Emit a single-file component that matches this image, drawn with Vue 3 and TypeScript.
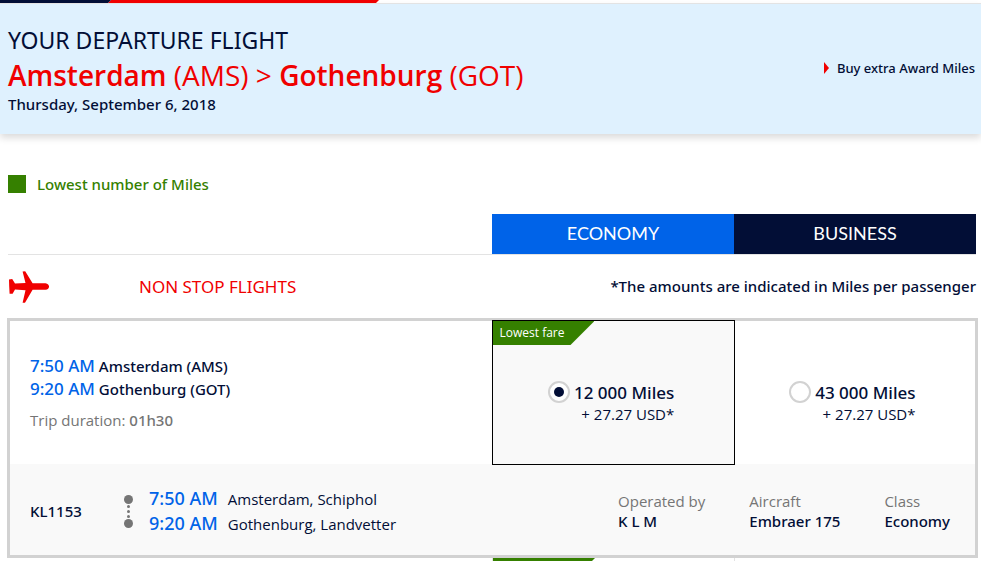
<script setup lang="ts">
import { ref } from 'vue'

interface Fare {
  id: string
  cabin: string
  miles: string
  tax: string
  lowest: boolean
}

interface Stop {
  time: string
  city: string
  airport: string
}

const fares: Fare[] = [
  { id: 'economy', cabin: 'ECONOMY', miles: '12 000 Miles', tax: '+ 27.27 USD*', lowest: true },
  { id: 'business', cabin: 'BUSINESS', miles: '43 000 Miles', tax: '+ 27.27 USD*', lowest: false },
]

const stops: Stop[] = [
  { time: '7:50 AM', city: 'Amsterdam (AMS)', airport: 'Amsterdam, Schiphol' },
  { time: '9:20 AM', city: 'Gothenburg (GOT)', airport: 'Gothenburg, Landvetter' },
]

const facts = [
  { label: 'Operated by', value: 'K L M' },
  { label: 'Aircraft', value: 'Embraer 175' },
  { label: 'Class', value: 'Economy' },
]

const selected = ref('economy')
</script>

<template>
  <div class="page">
    <div class="brand-bar">
      <span class="brand-red"></span>
      <span class="brand-navy"></span>
    </div>

    <header class="banner">
      <div>
        <h1 class="title medium">YOUR DEPARTURE FLIGHT</h1>
        <p class="route"><b>Amsterdam</b> (AMS) &gt; <b>Gothenburg</b> (GOT)</p>
        <p class="date medium">Thursday, September 6, 2018</p>
      </div>
      <a class="buy medium" href="#">Buy extra Award Miles</a>
    </header>

    <main class="content">
      <p class="legend medium"><span class="swatch"></span>Lowest number of Miles</p>

      <div class="cabins">
        <div v-for="fare in fares" :key="fare.id" class="cabin" :class="fare.id">{{ fare.cabin }}</div>
      </div>

      <div class="group-head">
        <svg class="plane" viewBox="0 0 42 34" aria-hidden="true">
          <path
            d="M1 9.5 4.2 9 7 13.6 17.5 13 14.6 1.6 17.2 1.2 24.6 13.2 37.5 13.2C42.2 13.6 42.2 19.4 37.5 19.8L24.6 19.8 17 32.8 14.6 32.8 17.5 20.2 7 19.6 4.6 23.8 1.6 23.8 1.2 16.5Z"
          />
        </svg>
        <h2 class="group-title medium">NON STOP FLIGHTS</h2>
        <p class="note medium">*The amounts are indicated in Miles per passenger</p>
      </div>

      <section class="flight">
        <div class="options">
          <div class="summary">
            <p v-for="stop in stops" :key="stop.time" class="leg medium">
              <span class="leg-time">{{ stop.time }}</span> {{ stop.city }}
            </p>
            <p class="duration">Trip duration: <span class="medium">01h30</span></p>
          </div>
          <label
            v-for="fare in fares"
            :key="fare.id"
            class="fare"
            :class="{ active: selected === fare.id }"
            :for="fare.id"
          >
            <span v-if="fare.lowest" class="tag">Lowest fare</span>
            <input :id="fare.id" v-model="selected" class="radio" type="radio" name="fare" :value="fare.id" />
            <span class="price">
              <span class="miles medium">{{ fare.miles }}</span>
              <span class="tax">{{ fare.tax }}</span>
            </span>
          </label>
        </div>

        <div class="details">
          <span class="number medium">KL1153</span>
          <svg class="track" viewBox="0 0 9 33" aria-hidden="true">
            <circle cx="4.5" cy="4.5" r="4.5" />
            <circle cx="4.5" cy="28.5" r="4.5" />
            <circle cx="4.5" cy="11.5" r="1.5" />
            <circle cx="4.5" cy="16.5" r="1.5" />
            <circle cx="4.5" cy="21.5" r="1.5" />
          </svg>
          <div class="stops">
            <template v-for="stop in stops" :key="stop.time">
              <span class="stop-time medium">{{ stop.time }}</span>
              <span class="stop-place">{{ stop.airport }}</span>
            </template>
          </div>
          <dl class="facts">
            <div v-for="fact in facts" :key="fact.label">
              <dt>{{ fact.label }}</dt>
              <dd class="medium">{{ fact.value }}</dd>
            </div>
          </dl>
        </div>
      </section>

      <div class="next">
        <div class="next-fare"><span class="next-tag"></span></div>
        <div class="next-fare"></div>
      </div>
    </main>
  </div>
</template>

<style>
body {
  margin: 0;
  background: #fff;
}
</style>

<style scoped>
.page {
  font-family: 'Open Sans', 'Noto Sans', sans-serif;
  font-size: 15px;
  color: #020e36;
}

.page * {
  box-sizing: border-box;
}

h1,
h2,
p,
dl,
dd {
  margin: 0;
}

b {
  font-weight: 600;
}

.medium {
  font-family: 'Noto Sans', 'Open Sans', sans-serif;
  font-weight: 500;
}

.brand-bar {
  display: flex;
  flex-direction: row-reverse;
  justify-content: flex-end;
  height: 3px;
}

.brand-navy {
  width: 111px;
  background: #020e36;
  clip-path: polygon(0 0, 100% 0, calc(100% - 3px) 100%, 0 100%);
}

.brand-red {
  width: 271px;
  margin-left: -3px;
  background: #f00000;
  clip-path: polygon(3px 0, 100% 0, calc(100% - 3px) 100%, 0 100%);
}

.banner {
  display: flex;
  justify-content: space-between;
  align-items: center;
  height: 131px;
  padding: 0 6px 0 8px;
  border-top: 1px solid #e3e3e3;
  background: #dff1fe;
  box-shadow: 0 4px 7px rgba(0, 0, 0, 0.14);
}

.title {
  font-size: 23px;
  font-weight: 400;
  line-height: 32px;
}

.route {
  font-size: 28px;
  line-height: 38px;
  color: #f00000;
}

.date {
  line-height: 20px;
}

.buy {
  display: flex;
  align-items: center;
  gap: 8px;
  padding-bottom: 2px;
  font-size: 13px;
  color: inherit;
  text-decoration: none;
}

.buy::before {
  content: '';
  border-left: 5px solid #f00000;
  border-top: 6px solid transparent;
  border-bottom: 6px solid transparent;
}

.content {
  padding: 40px 5px 0 8px;
}

.legend {
  display: flex;
  align-items: center;
  gap: 11px;
  line-height: 20px;
  color: #358000;
}

.swatch {
  width: 18px;
  height: 18px;
  background: #358000;
}

.cabins {
  display: grid;
  grid-template-columns: 1fr 1fr;
  margin-top: 20px;
  padding-left: 50%;
  border-bottom: 1px solid #e3e3e3;
}

.cabin {
  padding-bottom: 2px;
  font-family: Lato, sans-serif;
  font-size: 18px;
  line-height: 38px;
  text-align: center;
  color: #fff;
}

.economy {
  background: #0063e8;
}

.business {
  background: #020e36;
}

.group-head {
  display: flex;
  align-items: center;
  height: 63px;
}

.plane {
  width: 42px;
  height: 34px;
  fill: #f00000;
}

.group-title {
  margin-left: 89px;
  font-size: 17px;
  font-weight: 400;
  color: #f00000;
}

.note {
  margin-left: auto;
  padding-bottom: 2px;
}

.flight {
  margin: 0 -2px 0 -1px;
  border: 3px solid #d2d2d2;
}

.options {
  display: grid;
  grid-template-columns: 2fr 1fr 1fr;
  height: 143px;
}

.summary {
  padding: 33px 20px 0;
}

.leg {
  height: 23px;
  line-height: 23px;
}

.leg-time {
  font-size: 17px;
  color: #0063e8;
}

.duration {
  margin-top: 8px;
  line-height: 24px;
  color: #757575;
}

.fare {
  position: relative;
  display: flex;
  justify-content: center;
  align-items: flex-start;
  gap: 4px;
  margin: -1px -1px -1px -1px;
  padding: 60px 4px 0 0;
  border: 1px solid transparent;
  cursor: pointer;
}

.fare.active {
  border-color: #000;
  background: #f9f9f9;
}

.tag {
  position: absolute;
  top: 0;
  left: 0;
  padding: 0 30px 0 7px;
  font-size: 12px;
  line-height: 24px;
  color: #fff;
  background: #358000;
  clip-path: polygon(0 0, 100% 0, calc(100% - 24px) 100%, 0 100%);
}

.radio {
  display: grid;
  place-items: center;
  width: 22px;
  height: 22px;
  margin: 0;
  appearance: none;
  border: 2px solid #d2d2d2;
  border-radius: 50%;
  background: #fff;
}

.radio:checked::before {
  content: '';
  width: 10px;
  height: 10px;
  border-radius: 50%;
  background: #020e36;
}

.price {
  display: flex;
  flex-direction: column;
  align-items: flex-end;
}

.miles {
  font-size: 17px;
  line-height: 24px;
}

.tax {
  line-height: 18px;
}

.details {
  display: flex;
  align-items: center;
  height: 91px;
  padding: 3px 25px 0 20px;
  background: #f9f9f9;
}

.number {
  width: 94px;
}

.track {
  width: 9px;
  height: 33px;
  margin-right: 16px;
  fill: #757575;
}

.stops {
  display: grid;
  grid-template-columns: auto auto;
  column-gap: 10px;
  align-items: baseline;
  line-height: 24px;
}

.stop-time {
  font-size: 18px;
  color: #0063e8;
}

.facts {
  display: flex;
  gap: 44px;
  margin-left: auto;
  line-height: 20px;
}

.facts dt {
  color: #757575;
}

.next {
  display: grid;
  grid-template-columns: 1fr 1fr;
  height: 3px;
  padding-left: 50%;
  overflow: hidden;
}

.next-fare {
  border-left: 1px solid #e3e3e3;
}

.next-tag {
  display: block;
  width: 102px;
  height: 24px;
  background: #358000;
  clip-path: polygon(0 0, 100% 0, calc(100% - 24px) 100%, 0 100%);
}
</style>
